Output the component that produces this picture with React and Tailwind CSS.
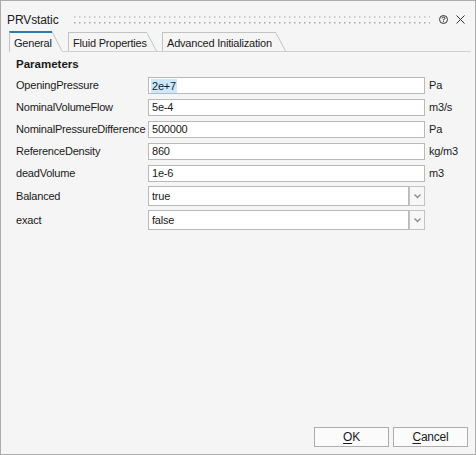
import React from 'react';

const rows = [
    { label: 'OpeningPressure', value: '2e+7', unit: 'Pa', selected: true },
    { label: 'NominalVolumeFlow', value: '5e-4', unit: 'm3/s' },
    { label: 'NominalPressureDifference', value: '500000', unit: 'Pa' },
    { label: 'ReferenceDensity', value: '860', unit: 'kg/m3' },
    { label: 'deadVolume', value: '1e-6', unit: 'm3' },
];

const combos = [
    { label: 'Balanced', value: 'true' },
    { label: 'exact', value: 'false' },
];

const Slant = ({ active }) => (
    <svg width="10" height="20" viewBox="0 0 10 20" className="block">
        <line x1="0" y1={active ? 0.5 : 1} x2="10" y2="20" stroke="#c3c3c3" strokeWidth="1" />
    </svg>
);

const Chevron = () => (
    <svg width="7" height="5" viewBox="0 0 7 5">
        <path d="M0.5 0.5 L3.5 3.5 L6.5 0.5" fill="none" stroke="#8a8a8a" strokeWidth="1.4" />
    </svg>
);

export default function App() {
    return (
        <div className="w-[476px] h-[455px] bg-[#f5f5f5] border border-[#acacac] flex flex-col font-['Liberation_Sans',Arial,sans-serif] text-[11px] tracking-[-0.2px] text-[#1a1a1a]">
            {/* title bar */}
            <div className="h-[30px] pt-[7px] flex items-center pl-[6px]">
                <span className="w-[67px] text-[12px] tracking-[-0.1px] text-[#202020]">PRVstatic</span>
                <svg width="356" height="8" className="block">
                    <defs>
                        <pattern id="grip" width="5" height="6" patternUnits="userSpaceOnUse">
                            <rect x="0" y="0" width="1.5" height="1.5" fill="#a8a8a8" />
                        </pattern>
                    </defs>
                    <rect x="0" y="0.5" width="356" height="8" fill="url(#grip)" />
                </svg>
                <svg width="9" height="9" viewBox="0 0 9 9" className="ml-[9px] block">
                    <circle cx="4.5" cy="4.5" r="4" fill="none" stroke="#333" strokeWidth="1" />
                    <path d="M3 3.4 Q3 2 4.5 2 Q6 2 6 3.3 Q6 4.2 4.5 4.6 L4.5 5.4" fill="none" stroke="#333" strokeWidth="1" />
                    <rect x="4" y="6.2" width="1" height="1" fill="#333" />
                </svg>
                <svg width="9" height="9" viewBox="0 0 9 9" className="ml-[8px] block">
                    <path d="M0.5 0.5 L8.5 8.5 M8.5 0.5 L0.5 8.5" stroke="#333" strokeWidth="1" />
                </svg>
            </div>

            {/* tabs */}
            <div className="h-[21px] flex items-stretch pl-[8px] whitespace-nowrap">
                <div className="flex">
                    <div className="w-[43px] border-l border-[#c3c3c3] border-t-2 border-t-[#2b79b5] pl-[4px] pt-[2px] leading-[16px]">
                        General
                    </div>
                    <Slant active />
                </div>
                <div className="w-[6px] border-b border-[#d0d0d0]" />
                <div className="flex mt-px border-b border-[#d0d0d0]">
                    <div className="w-[79px] border-l border-t border-[#c3c3c3] pl-[4px] pt-[2px] leading-[16px]">
                        Fluid Properties
                    </div>
                    <Slant />
                </div>
                <div className="w-[5px] border-b border-[#d0d0d0]" />
                <div className="flex mt-px border-b border-[#d0d0d0]">
                    <div className="w-[114px] border-l border-t border-[#c3c3c3] pl-[4px] pt-[2px] leading-[16px]">
                        Advanced Initialization
                    </div>
                    <Slant />
                </div>
                <div className="flex-1 border-b border-[#d0d0d0] mr-[4px]" />
            </div>

            {/* parameters */}
            <div className="pl-[15px] pt-[5px]">
                <div className="font-bold h-[14px] leading-[14px] text-[11.5px] tracking-normal">Parameters</div>
                <div className="mt-[6px] flex flex-col gap-[5px]">
                    {rows.map((r) => (
                        <div key={r.label} className="flex items-center h-[17px]">
                            <div className="w-[132px] whitespace-nowrap">{r.label}</div>
                            <div className="w-[277px] h-[17px] bg-white border border-[#b9b9b9] flex items-center pl-[2px]">
                                <span className={r.selected ? 'bg-[#cce8ff] px-px leading-[14px]' : 'px-px'}>{r.value}</span>
                            </div>
                            <div className="pl-[4px]">{r.unit}</div>
                        </div>
                    ))}
                </div>
                <div className="mt-[4px] flex flex-col gap-[4px]">
                    {combos.map((c) => (
                        <div key={c.label} className="flex items-center h-[20px]">
                            <div className="w-[132px]">{c.label}</div>
                            <div className="w-[261px] h-[20px] bg-white border border-[#b9b9b9] flex items-center pl-[3px]">
                                {c.value}
                            </div>
                            <div className="w-[16px] h-[20px] border border-[#c3c3c3] bg-[#f7f7f7] flex items-center justify-center">
                                <Chevron />
                            </div>
                        </div>
                    ))}
                </div>
            </div>

            {/* buttons */}
            <div className="mt-auto flex justify-end gap-[4px] pr-[7px] pb-[7px]">
                <button className="w-[75px] h-[20px] bg-[#fbfbfb] border border-[#adadad] text-[12px] leading-[18px]">
                    <span className="underline underline-offset-2">O</span>K
                </button>
                <button className="w-[75px] h-[20px] bg-[#fbfbfb] border border-[#adadad] text-[12px] leading-[18px]">
                    <span className="underline underline-offset-2">C</span>ancel
                </button>
            </div>
        </div>
    );
}
